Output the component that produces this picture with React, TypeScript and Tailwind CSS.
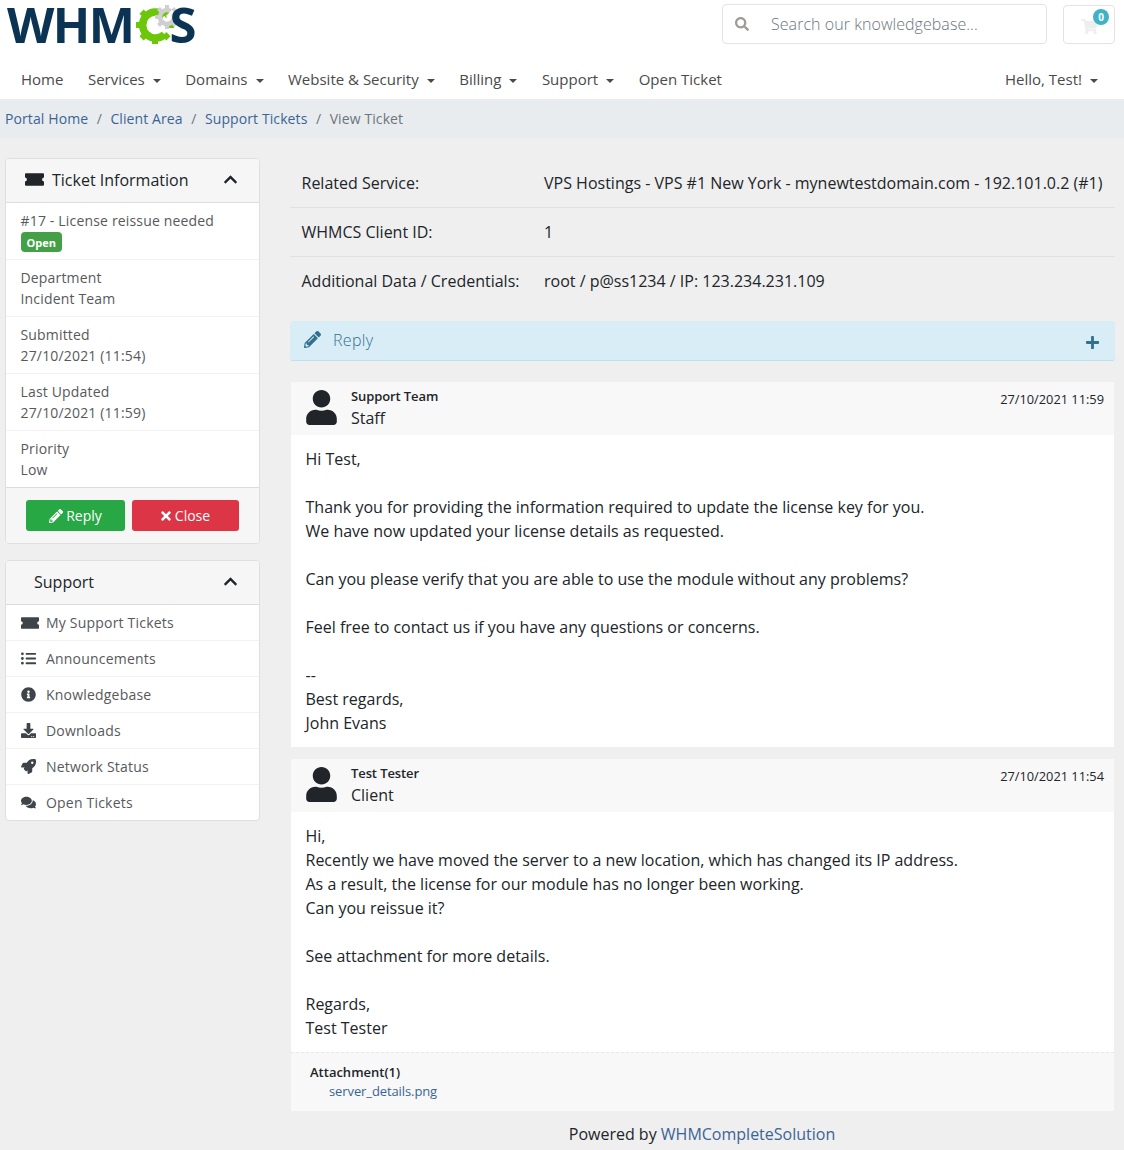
import { FaChevronUp, FaComments, FaDownload, FaInfoCircle, FaListUl, FaPencilAlt, FaPlus, FaRocket, FaSearch, FaShoppingCart, FaTimes, FaUser } from "react-icons/fa";
import type { ReactNode } from "react";

const navItems = [
  { label: "Home", caret: false },
  { label: "Services", caret: true },
  { label: "Domains", caret: true },
  { label: "Website & Security", caret: true },
  { label: "Billing", caret: true },
  { label: "Support", caret: true },
  { label: "Open Ticket", caret: false },
];

const ticketInfo = [
  { title: "Department", value: "Incident Team" },
  { title: "Submitted", value: "27/10/2021 (11:54)" },
  { title: "Last Updated", value: "27/10/2021 (11:59)" },
  { title: "Priority", value: "Low" },
];

// solid ticket, fa5 "ticket-alt" at this size reads with no inner hole
function Ticket({ className }: { className?: string }) {
  return (
    <svg viewBox="0 0 20 13" className={className} fill="currentColor">
      <path d="M1 0h18a1 1 0 0 1 1 1v3.5a2 2 0 0 0 0 4V12a1 1 0 0 1-1 1H1a1 1 0 0 1-1-1V8.500a2 2 0 0 0 0-4V1a1 1 0 0 1 1-1z" />
    </svg>
  );
}

const supportLinks = [
  { label: "My Support Tickets", icon: <Ticket className="h-[12px] w-[18px]" /> },
  { label: "Announcements", icon: <FaListUl /> },
  { label: "Knowledgebase", icon: <FaInfoCircle /> },
  { label: "Downloads", icon: <FaDownload /> },
  { label: "Network Status", icon: <FaRocket /> },
  { label: "Open Tickets", icon: <FaComments /> },
];

const greenTeeth = [45, 90, 135, 180, 225, 270, 315];
const greyTeeth = [0, 45, 90, 135, 180, 225, 270, 315];

function Caret() {
  return <span className="ml-[8px] inline-block border-x-[4.5px] border-t-[4.5px] border-x-transparent border-t-[#4a4a4a] align-[2px]" />;
}

function Gear() {
  return (
    <svg viewBox="0 0 50 44" className="mt-[4px] h-[44px] w-[50px] shrink-0">
      <path d="M30.500 11.500A13 13 0 1 0 30.500 30.500" fill="none" stroke="#6cc70a" strokeWidth="7.500" />
      {greenTeeth.map((a) => (
        <rect key={a} x="18" y="2" width="6" height="6" fill="#6cc70a" transform={`rotate(${a} 21 21)`} />
      ))}
      <circle cx="33" cy="13" r="7" fill="none" stroke="#cfcfcf" strokeWidth="4.500" />
      {greyTeeth.map((a) => (
        <rect key={a} x="31" y="1" width="4" height="4" fill="#cfcfcf" transform={`rotate(${a} 33 13)`} />
      ))}
      <path d="M33 13l6-6" stroke="#ffffff" strokeWidth="3" />
    </svg>
  );
}

function Logo() {
  return (
    <div className="flex h-[50px] w-[195px] items-start font-['Open_Sans',sans-serif] text-[49px] font-bold leading-[48px] tracking-[-1.5px] text-[#0b3353]">
      <span>WHM</span>
      <Gear />
      <span className="-ml-[14px]">S</span>
    </div>
  );
}

function PanelHead({ children }: { children: ReactNode }) {
  return (
    <div className="flex h-[44px] items-center justify-between border-b border-[#dcdcdc] bg-[#f6f6f6] pb-[2px] pl-[19px] pr-[21px] text-[16px] text-[#212529]">
      {children}
      <FaChevronUp className="text-[15px] text-[#212529]" />
    </div>
  );
}

function Message({ name, role, date, children, attachment }: { name: string; role: string; date: string; children: ReactNode; attachment?: boolean }) {
  return (
    <div className="mx-[1px] bg-white">
      <div className="flex h-[53px] bg-[#f8f8f8] pl-[15px] pr-[10px]">
        <FaUser className="mt-[8px] h-[35px] w-[31px] text-[#212529]" />
        <div className="ml-[14px] flex-1 pt-[4px]">
          <div className="text-[13px] font-semibold leading-[20px] tracking-[-0.1px] text-[#212529]">{name}</div>
          <div className="text-[16px] leading-[24px] text-[#212529]">{role}</div>
        </div>
        <div className="pt-[7px] text-[12.800px] leading-[20px] text-[#212529]">{date}</div>
      </div>
      <div className="py-[12px] pl-[14.500px] pr-[15px] text-[16px] leading-[24px] text-[#212529]">{children}</div>
      {attachment && (
        <div className="h-[59px] border-t border-dashed border-[#e8e8e8] bg-[#f8f8f8] pl-[19px] pt-[9px] text-[13px] leading-[20px]">
          <div className="font-semibold text-[#212529]">Attachment(1)</div>
          <div className="-mt-[1px] pl-[19px] tracking-[-0.1px] text-[#3a6496]">server_details.png</div>
        </div>
      )}
    </div>
  );
}

export default function App() {
  return (
    <div className="h-[1150px] overflow-hidden bg-[#efefef] font-['Open_Sans',sans-serif] text-[#212529]">
      <header className="h-[99px] bg-white">
        <div className="flex h-[59px] items-start justify-between pl-[7px] pr-[9px]">
          <Logo />
          <div className="flex pt-[4px]">
            <div className="flex h-[40px] w-[325px] items-center rounded-[4px] border border-[#e3e3e3] pl-[12px] text-[16px] font-light tracking-[0.05px] text-[#6c757d]">
              <FaSearch className="mr-[22px] text-[14px] text-[#a09a94]" />
              Search our knowledgebase...
            </div>
            <div className="relative ml-[16px] mt-[1px] flex h-[39px] w-[52px] items-center justify-center rounded-[4px] border border-[#e3e3e3]">
              <FaShoppingCart className="mt-[4px] text-[17px] text-[#eeeeee]" />
              <span className="absolute right-[5px] top-[3px] flex h-[16px] w-[16px] items-center justify-center rounded-full bg-[#3fb2c6] text-[10px] font-bold text-white">0</span>
            </div>
          </div>
        </div>
        <nav className="flex items-center justify-between pl-[21px] pr-[26px] text-[15px] leading-[40px] text-[#4a4a4a]">
          <div className="flex gap-[24.500px]">
            {navItems.map((n) => (
              <span key={n.label}>
                {n.label}
                {n.caret && <Caret />}
              </span>
            ))}
          </div>
          <span>
            Hello, Test!
            <Caret />
          </span>
        </nav>
      </header>

      <div className="flex h-[39px] items-center gap-[8.500px] bg-[#e9ecef] pl-[5px] text-[14px] tracking-[0.1px] text-[#3a6496]">
        <span>Portal Home</span>
        <span className="text-[#6c757d]">/</span>
        <span>Client Area</span>
        <span className="text-[#6c757d]">/</span>
        <span>Support Tickets</span>
        <span className="text-[#6c757d]">/</span>
        <span className="text-[#6c757d]">View Ticket</span>
      </div>

      <main className="flex items-start gap-[30px] pl-[5px] pr-[9px] pt-[20px]">
        <aside className="w-[255px] shrink-0">
          <div className="overflow-hidden rounded-[4px] border border-[#dfdfdf] bg-white">
            <PanelHead>
              <span className="flex items-center">
                <Ticket className="mr-[8px] h-[13px] w-[19px]" />
                Ticket Information
              </span>
            </PanelHead>
            <div className="h-[57px] border-b border-[#f2f2f2] px-[14.500px] pt-[7px] text-[14px] leading-[21px] tracking-[0.17px] text-[#58595b]">
              #17 - License reissue needed
              <div className="mt-[1px] flex">
                <span className="flex h-[20px] items-center rounded-[4px] bg-[#43a047] px-[6px] text-[11px] font-bold leading-none tracking-normal text-white">Open</span>
              </div>
            </div>
            {ticketInfo.map((t, i) => (
              <div key={t.title} className={`h-[57px] px-[14.500px] pt-[7px] text-[14px] leading-[21px] tracking-[0.17px] text-[#58595b] ${i < 3 ? "border-b border-[#f2f2f2]" : ""}`}>
                <div>{t.title}</div>
                <div>{t.value}</div>
              </div>
            ))}
            <div className="-mt-[1px] flex h-[56px] gap-[7px] border-t border-[#dcdcdc] bg-[#f6f6f6] pl-[20px] pt-[12px]">
              <span className="flex h-[31px] w-[99px] items-center justify-center gap-[3px] rounded-[3px] bg-[#28a745] text-[14px] text-white">
                <FaPencilAlt className="text-[14px]" />
                Reply
              </span>
              <span className="flex h-[31px] w-[107px] items-center justify-center gap-[2px] rounded-[3px] bg-[#dc3545] pr-[2px] text-[14px] text-white">
                <FaTimes className="text-[14px]" />
                Close
              </span>
            </div>
          </div>

          <div className="mt-[16px] overflow-hidden rounded-[4px] border border-[#dfdfdf] bg-white">
            <PanelHead>
              <span className="pl-[9px]">Support</span>
            </PanelHead>
            {supportLinks.map((l, i) => (
              <div key={l.label} className={`flex items-center pl-[15px] text-[14px] tracking-[0.2px] text-[#58595b] ${i < 5 ? "h-[36px] border-b border-[#f2f2f2]" : "h-[35px]"}`}>
                <span className="flex w-[25px] text-[15px] text-[#3f444a]">{l.icon}</span>
                {l.label}
              </div>
            ))}
          </div>
        </aside>

        <section className="min-w-0 flex-1">
          <div className="pt-[1px] text-[16px] leading-[24px] text-[#212529]">
            {[
              ["Related Service:", "VPS Hostings - VPS #1 New York - mynewtestdomain.com - 192.101.0.2 (#1)"],
              ["WHMCS Client ID:", "1"],
              ["Additional Data / Credentials:", "root / p@ss1234 / IP: 123.234.231.109"],
            ].map(([k, v], i) => (
              <div key={k} className={`flex h-[49px] items-center pl-[11.500px] ${i < 2 ? "border-b border-[#dee2e6]" : "pb-[2px]"}`}>
                <span className="w-[242.500px] shrink-0">{k}</span>
                <span className="whitespace-nowrap">{v}</span>
              </div>
            ))}
          </div>

          <div className="mt-[15px] flex h-[40px] items-center justify-between rounded-[3px] border-b border-[#b5e3ee] bg-[#d9edf7] pb-[2px] pl-[14px] pr-[14px] text-[16px] text-[#31708f]">
            <span className="flex items-center">
              <FaPencilAlt className="mr-[12px] text-[17px]" />
              <span className="font-light tracking-[0.3px]">Reply</span>
            </span>
            <FaPlus className="mr-[1px] mt-[5px] text-[15px]" />
          </div>

          <div className="mt-[21px]">
            <Message name="Support Team" role="Staff" date="27/10/2021 11:59">
              Hi Test,
              <br />
              <br />
              Thank you for providing the information required to update the license key for you.
              <br />
              We have now updated your license details as requested.
              <br />
              <br />
              Can you please verify that you are able to use the module without any problems?
              <br />
              <br />
              Feel free to contact us if you have any questions or concerns.
              <br />
              <br />
              --
              <br />
              Best regards,
              <br />
              John Evans
            </Message>
          </div>
          <div className="mt-[12px]">
            <Message name="Test Tester" role="Client" date="27/10/2021 11:54" attachment>
              Hi,
              <br />
              Recently we have moved the server to a new location, which has changed its IP address.
              <br />
              As a result, the license for our module has no longer been working.
              <br />
              Can you reissue it?
              <br />
              <br />
              See attachment for more details.
              <br />
              <br />
              Regards,
              <br />
              Test Tester
            </Message>
          </div>
          <div className="mt-[11px] pr-[1px] text-center text-[16px] leading-[24px] text-[#212529]">
            Powered by <span className="text-[#3a6496]">WHMCompleteSolution</span>
          </div>
        </section>
      </main>
    </div>
  );
}
